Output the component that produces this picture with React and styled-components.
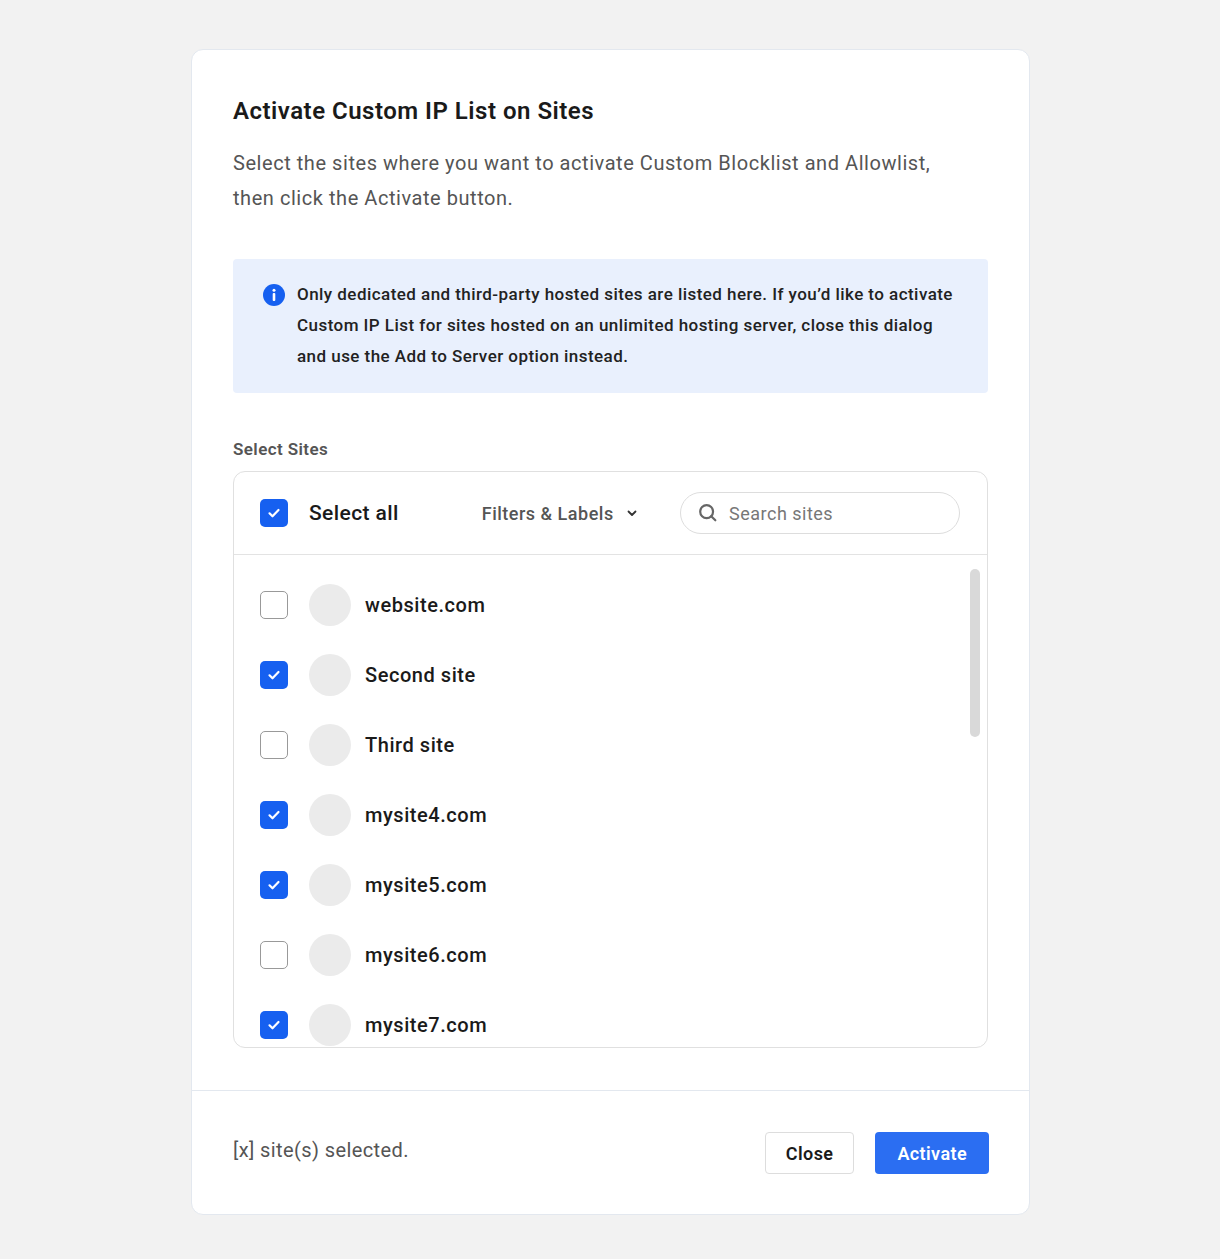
import React from "react";
import styled, { createGlobalStyle } from "styled-components";

const Global = createGlobalStyle`
  body{margin:0;background:#f2f2f2;font-family:Roboto,"Noto Sans",sans-serif;}
`;
const Page = styled.div`padding:49px 0 45px 191px;`;
const Card = styled.div`width:839px;background:#fff;border:1px solid #e3e8ef;border-radius:12px;box-sizing:border-box;`;
const Body = styled.div`padding:45px 41px 42px;`;
const Title = styled.h1`margin:0;font-size:24px;font-weight:600;color:#1a1a1a;line-height:32px;letter-spacing:0.5px;`;
const Desc = styled.p`margin:19px 0 0;font-size:20px;line-height:35px;color:#555;letter-spacing:0.55px;width:730px;`;
const Info = styled.div`margin-top:43px;background:#e9f0fd;border-radius:4px;padding:20px 30px 21px 30px;display:flex;gap:12px;font-size:17px;line-height:31px;color:#222;font-weight:500;letter-spacing:0.45px;`;
const Label = styled.div`margin-top:44px;font-size:17px;font-weight:600;color:#555;line-height:24px;letter-spacing:0.4px;`;
const ListBox = styled.div`margin-top:10px;border:1px solid #e0e0e0;border-radius:12px;overflow:hidden;`;
const Header = styled.div`height:82px;border-bottom:1px solid #e3e3e3;display:flex;align-items:center;padding:0 27px 0 26px;`;
const Check = styled.div`flex:none;width:28px;height:28px;box-sizing:border-box;border-radius:5px;display:flex;align-items:center;justify-content:center;
  background:${p=>p.$on?"#1660f0":"#fff"};border:${p=>p.$on?"none":"1.5px solid #999"};`;
const SelAll = styled.div`margin-left:21px;font-size:21px;font-weight:500;color:#1a1a1a;letter-spacing:0.4px;`;
const Filter = styled.div`margin-left:83px;display:flex;align-items:center;gap:12px;font-size:18px;color:#555;font-weight:500;letter-spacing:0.5px;`;
const Search = styled.div`margin-left:auto;width:280px;height:42px;box-sizing:border-box;border:1px solid #ddd;border-radius:21px;display:flex;align-items:center;gap:10px;padding-left:16px;color:#777;font-size:18px;letter-spacing:0.5px;`;
const Rows = styled.div`position:relative;height:492px;overflow:hidden;padding-top:15px;box-sizing:border-box;`;
const Row = styled.div`height:70px;display:flex;align-items:center;padding:0 27px 0 26px;`;
const Avatar = styled.div`width:42px;height:42px;border-radius:50%;background:#ebebeb;margin-left:21px;`;
const Name = styled.div`margin-left:14px;font-size:20px;font-weight:500;color:#1a1a1a;letter-spacing:0.55px;`;
const Thumb = styled.div`position:absolute;right:7px;top:14px;width:10px;height:168px;border-radius:5px;background:#d9d9d9;`;
const Footer = styled.div`border-top:1px solid #e3e8ef;padding:41px 40px 40px 41px;display:flex;align-items:center;`;
const Count = styled.div`font-size:20px;color:#555;margin-top:-6px;letter-spacing:0.4px;`;
const Btn = styled.button`height:42px;border-radius:4px;font-family:inherit;font-size:18px;font-weight:600;letter-spacing:0.4px;
  padding:0 ${p=>p.$primary?"22px":"20px"};
  background:${p=>p.$primary?"#2b6ef2":"#fff"};color:${p=>p.$primary?"#fff":"#1a1a1a"};border:${p=>p.$primary?"none":"1px solid #ddd"};
  margin-left:${p=>p.$primary?"21px":"auto"};`;

const Tick = () => (<svg width="16" height="16" viewBox="0 0 16 16"><path d="M3.5 8.3l3 3 6-6.3" fill="none" stroke="#fff" strokeWidth="2.2" strokeLinecap="round" strokeLinejoin="round"/></svg>);
const InfoIcon = () => (<svg width="22" height="22" viewBox="0 0 22 22" style={{flex:"none",marginTop:5}}><circle cx="11" cy="11" r="11" fill="#1660f0"/><circle cx="11" cy="6.3" r="1.5" fill="#fff"/><rect x="9.7" y="9" width="2.6" height="8" rx="1" fill="#fff"/></svg>);
const sites=[["website.com",0],["Second site",1],["Third site",0],["mysite4.com",1],["mysite5.com",1],["mysite6.com",0],["mysite7.com",1],["mysite8.com",0]];

export default function App(){
  return (<><Global/><Page><Card>
    <Body>
      <Title>Activate Custom IP List on Sites</Title>
      <Desc>Select the sites where you want to activate Custom Blocklist and Allowlist, then click the Activate button.</Desc>
      <Info><InfoIcon/><div>Only dedicated and third-party hosted sites are listed here. If you’d like to activate Custom IP List for sites hosted on an unlimited hosting server, close this dialog and use the Add to Server option instead.</div></Info>
      <Label>Select Sites</Label>
      <ListBox>
        <Header>
          <Check $on><Tick/></Check>
          <SelAll>Select all</SelAll>
          <Filter>Filters &amp; Labels<svg width="12" height="12" viewBox="0 0 12 12"><path d="M2.5 4.5L6 8l3.5-3.5" fill="none" stroke="#333" strokeWidth="1.8" strokeLinecap="round" strokeLinejoin="round"/></svg></Filter>
          <Search><svg width="22" height="22" viewBox="0 0 24 24"><circle cx="10.5" cy="10.5" r="7" fill="none" stroke="#666" strokeWidth="2.4"/><path d="M15.5 15.5L20 20" stroke="#666" strokeWidth="2.4" strokeLinecap="round"/></svg>Search sites</Search>
        </Header>
        <Rows>
          {sites.map(([n,on])=>(<Row key={n}><Check $on={!!on}>{on?<Tick/>:null}</Check><Avatar/><Name>{n}</Name></Row>))}
          <Thumb/>
        </Rows>
      </ListBox>
    </Body>
    <Footer>
      <Count>[x] site(s) selected.</Count>
      <Btn>Close</Btn>
      <Btn $primary>Activate</Btn>
    </Footer>
  </Card></Page></>);
}
